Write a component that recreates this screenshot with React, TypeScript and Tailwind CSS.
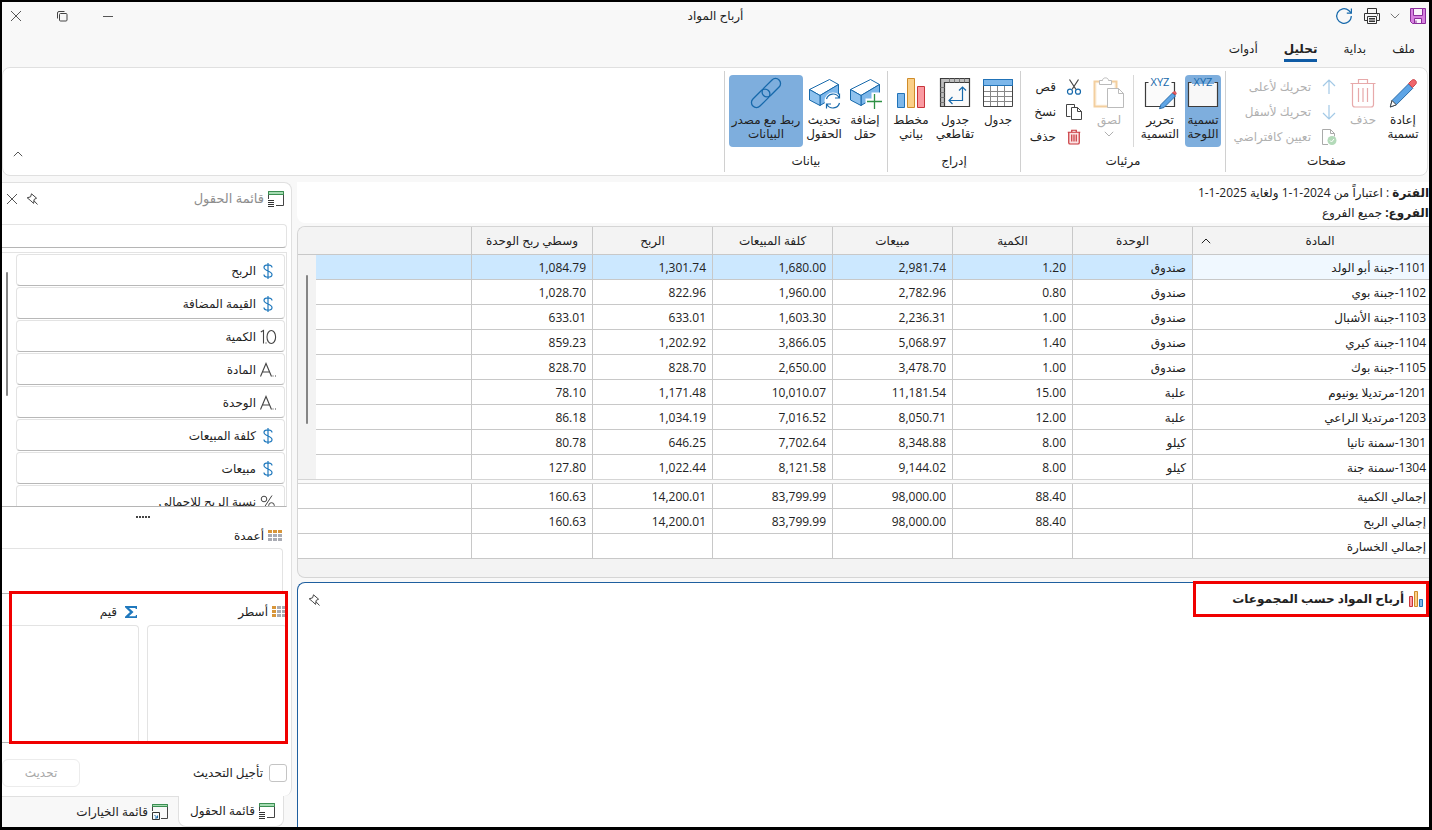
import React from "react";

type P = { className?: string };

const font = "font-['Open_Sans','DejaVu_Sans',sans-serif]";

/* ---------- icons ---------- */

const Svg = ({ s = 32, children, className = "" }: { s?: number; children: React.ReactNode; className?: string }) => (
  <svg width={s} height={s} viewBox={`0 0 ${s} ${s}`} fill="none" className={`shrink-0 overflow-visible ${className}`} aria-hidden="true">
    {children}
  </svg>
);

const RefreshIcon = () => (
  <Svg s={16}>
    <path d="M15.3 8A7.3 7.3 0 1 1 12.8 2.5L15.2 5" stroke="#1769ab" strokeWidth="1.2" />
    <path d="M15.4 0.5V5.2H10.8" stroke="#1769ab" strokeWidth="1.2" />
  </Svg>
);
const PrinterIcon = () => (
  <Svg s={16}>
    <path d="M3.5 5.5V.5h9v5M3.5 12.5h-3v-7h15v7h-3" stroke="#333" />
    <path d="M3.5 8.5h9v7h-9zM5 10.5h6M5 12h6M5 13.5h6M13 7h1" stroke="#333" />
  </Svg>
);
const SaveIcon = () => (
  <Svg s={16}>
    <path d="M.5.5h15v15H2.5l-2-2z" fill="#d77fe0" stroke="#8a2c9b" />
    <path d="M3.5.5h9v7h-9z" fill="#faf2fb" stroke="#8a2c9b" />
    <path d="M4.5 10.5h7v5h-7z" fill="#faf2fb" stroke="#8a2c9b" />
    <path d="M6 12.5v3" stroke="#8a2c9b" />
  </Svg>
);
const Chevron = ({ up, className = "" }: { up?: boolean; className?: string }) => (
  <Svg s={10} className={className}>
    <path d={up ? "M.8 7.2 5 3l4.2 4.2" : "M.8 2.8 5 7l4.2-4.2"} stroke="currentColor" />
  </Svg>
);
const CloseIcon = () => (
  <Svg s={12}>
    <path d="M1 1l10 10M11 1L1 11" stroke="#555" />
  </Svg>
);
const RestoreIcon = () => (
  <Svg s={12}>
    <rect x="3.5" y="3.5" width="7.5" height="7.5" rx="1" stroke="#444" />
    <path d="M1.5 8.5V3a1.5 1.5 0 0 1 1.5-1.5h5.5" stroke="#444" />
  </Svg>
);
const MinimizeIcon = () => (
  <Svg s={12}>
    <path d="M1 6.5h10" stroke="#555" />
  </Svg>
);
const PinIcon = () => (
  <Svg s={12}>
    <path d="M5.5.8 10.6 5.2 8.2 6.4 7.6 10.4 4.8 7.8 1.2 4.8 4.6 3.800z" stroke="#444" strokeLinejoin="round" />
    <path d="M8 7.8 11.500 11.500" stroke="#444" />
  </Svg>
);
const PencilIcon = () => (
  <Svg>
    <path d="M5 23.500 21.500 7l4.300 4.300L9.300 27.800 3.300 30z" fill="#5ea5e6" stroke="#2b6ca8" />
    <path d="M5 23.500l4.300 4.300-6 2.200z" fill="#fff" stroke="#444" />
    <path d="M21.500 6.500l3-3c1.500-1.400 3-1 4 0s1.300 2.600 0 4l-3 3z" fill="#f0666b" stroke="#c9474d" />
  </Svg>
);
const TrashIcon = ({ s = 32, faded }: { s?: number; faded?: boolean }) => (
  <svg width={s} height={s} viewBox="0 0 32 32" fill="none" aria-hidden="true" className="shrink-0"
    stroke={faded ? "#e7a9aa" : "#c8353b"} strokeWidth={faded ? 1.2 : 2.4}>
    <path d="M5.500 6.500v21q0 2.500 2.500 2.500h16q2.500 0 2.500-2.500v-21" fill={faded ? "none" : "#fbe3e3"} />
    <path d="M3.500 6.500h25M11.500 6.500v-4h9v4M11.500 11v14M16 11v14M20.500 11v14" />
  </svg>
);
const ArrowIcon = ({ down }: { down?: boolean }) => (
  <Svg s={16}>
    <path d={down ? "M8 1v14M2 9l6 6 6-6" : "M8 15V1M2 7l6-6 6 6"} stroke="#a3c9e6" strokeWidth="1.200" />
  </Svg>
);
const PageCheckIcon = () => (
  <Svg s={16}>
    <path d="M7 15.500H1.500V.5h8l4 4v3" stroke="#aaa" />
    <path d="M9.500.5v4h4" stroke="#aaa" />
    <circle cx="11" cy="11.500" r="4.500" fill="#b3dab9" />
    <path d="M9 11.500l1.500 1.500 2.500-3" stroke="#fff" />
  </Svg>
);
const XyzIcon = ({ pencil }: { pencil?: boolean }) => (
  <Svg>
    <path d="M1.500 5.500h29v24h-29z" fill={pencil ? "#fbfbfb" : "#f8f8f8"} />
    <path d="M5 4h22v3H5z" fill={pencil ? "#fff" : "#7eaedd"} />
    <path d="M4.500 5.500h-3v24h29v-24h-3" stroke="#3c3c3c" strokeWidth="1.200" />
    <text x="16" y="9" textAnchor="middle" fontSize="11" fontFamily="Open Sans" fill="#1769ab">XYZ</text>
    {pencil && (
      <g>
        <path d="M17 27.500 28.500 16l3 3L20 30.500l-4.500 1.200z" fill="#5ea5e6" stroke="#2b6ca8" />
        <path d="M28.500 16l1.200-1.200c1.200-1 3.500 1 2 2.800z" fill="#f0666b" stroke="#c9474d" />
      </g>
    )}
  </Svg>
);
const PasteIcon = () => (
  <Svg>
    <path d="M1.500 4.500h22v25h-22z" fill="#fdf6ec" stroke="#f3cf9f" strokeWidth="2" />
    <path d="M4 6.500h17v21H4z" fill="#fff" />
    <path d="M6.500 7.500v-4h3c0-3.500 6-3.500 6 0h3v4z" fill="#fff" stroke="#bbb" />
    <path d="M14.500 11.500h11l5 5v14h-16z" fill="#fff" stroke="#bbb" />
    <path d="M25.500 11.500v5h5" stroke="#bbb" />
  </Svg>
);
const CutIcon = () => (
  <Svg s={16}>
    <path d="M3.500.5l6.500 10M12.500.5L6 10.500" stroke="#444" strokeWidth="1.200" />
    <circle cx="4" cy="12.700" r="2.500" stroke="#1769ab" strokeWidth="1.200" />
    <circle cx="12" cy="12.700" r="2.500" stroke="#1769ab" strokeWidth="1.200" />
  </Svg>
);
const CopyIcon = () => (
  <Svg s={16}>
    <path d="M4.500 12.500h-4V.5h8v3" stroke="#444" />
    <path d="M5.500 3.500h6l4 4v8h-10z" stroke="#444" />
    <path d="M11.500 3.500v4h4" stroke="#444" />
  </Svg>
);
const TableIcon = () => (
  <Svg>
    <path d="M1.500 8.500h29v21h-29z" fill="#fff" />
    <path d="M1.500 14.500h29M1.500 19.500h29M1.500 24.500h29M8.500 8v21M15.500 8v21M22.500 8v21" stroke="#888" />
    <path d="M1.500 2.500h29v27h-29z" stroke="#444" />
    <path d="M1.500 2.500h29v6h-29z" fill="#7db7ea" stroke="#2173b8" />
  </Svg>
);
const PivotIcon = () => (
  <Svg>
    <path d="M1.500 1.500h29v28h-29z" fill="#fafafa" />
    <path d="M1.500 1.500h29v4h-25v24h-4z" fill="#bdbdbd" />
    <path d="M1.500 1.500h29v28h-29zM5.500 29V5.500H30" stroke="#3c3c3c" strokeWidth="1.200" />
    <path d="M10.500 1.500v4M15.500 1.500v4M20.500 1.500v4M25.500 1.500v4M1.500 10.500h4M1.500 15.500h4M1.500 20.500h4M1.500 25.500h4" stroke="#777" />
    <path d="M23.500 10.500v13h-13M20 13.500l3.500-3.500 3.500 3.500M13.500 20l-3.500 3.500 3.500 3.500" stroke="#1769ab" strokeWidth="1.200" />
  </Svg>
);
const ChartIcon = () => (
  <Svg>
    <path d="M2.500 16.500h7v14h-7z" fill="#7db7ea" stroke="#2173b8" />
    <path d="M12.500 1.500h7v29h-7z" fill="#fbd088" stroke="#cf8c2a" />
    <path d="M22.500 9.500h7v21h-7z" fill="#fa9ba2" stroke="#c8353b" />
  </Svg>
);
const CubeIcon = ({ refresh }: { refresh?: boolean }) => (
  <Svg>
    <path d="M1.500 12.500 21.500 2.500 30.500 7.500 12 18.500z" fill="#fff" stroke="#1769ab" />
    <path d="M12 18.500 30.500 7.500v10L12 28.500z" fill="#7db7ea" stroke="#1769ab" />
    <path d="M1.500 12.500v10.500L12 28.500V18.500z" fill="#8fc2ee" stroke="#1769ab" />
    {refresh ? (
      <g>
        <circle cx="25" cy="24" r="8.500" fill="#fff" />
        <path d="M18.500 22a6.800 6.800 0 0 1 12.500-1.500M31.500 26a6.800 6.800 0 0 1-12.500 1.500M31.500 16.500v4.500H27M18.500 31.500V27H23" stroke="#1769ab" strokeWidth="1.200" />
      </g>
    ) : (
      <g>
        <path d="M16.500 21.500h6v-6h9.500v17H16.500z" fill="#fff" />
        <path d="M25.500 17v15M18 24.500h15" stroke="#2e9145" strokeWidth="1.300" />
      </g>
    )}
  </Svg>
);
const LinkIcon = () => (
  <Svg>
    <g stroke="#1769ab" strokeWidth="1.300" transform="rotate(-45 16 16)">
      <rect x="-2.500" y="11" width="22" height="10" rx="5" />
      <path d="M12.500 16a5 5 0 0 1 5-5h12a5 5 0 0 1 0 10h-12a5 5 0 0 1-5-5z" />
    </g>
  </Svg>
);
const ListIcon = () => (
  <Svg s={16}>
    <path d="M.5 8V.5h15v14H8" stroke="#444" />
    <path d="M.5.500h15v3H.5z" fill="#a5dbb2" stroke="#3b8f52" />
    <path d="M0 9.500h6M0 11.500h6M0 13.500h6M0 15.500h6" stroke="#333" />
  </Svg>
);
const OptionsIcon = () => (
  <Svg s={16}>
    <path d="M.5 7V.5h15v14H9" stroke="#444" />
    <path d="M.5.500h15v2H.5z" fill="#a5dbb2" stroke="#3b8f52" />
    <path d="M.5 8.500h7v7h-7z" stroke="#333" />
    <path d="M2.500 11l3 3M5.500 11.500v2.500H3" stroke="#1769ab" />
  </Svg>
);
const GridIcon = ({ side }: { side?: boolean }) => (
  <Svg s={14}>
    {[0, 1, 2].map((r) =>
      [0, 1, 2].map((c) => (
        <rect key={`${r}${c}`} x={c * 5} y={1 + r * 4} width="4" height="3" fill={(side ? c === 0 : r === 0) ? "#d8963a" : "#a9abb3"} />
      )),
    )}
  </Svg>
);
const SigmaIcon = () => (
  <Svg s={12}>
    <path d="M0 0h12v3h-1.200l-.5-1H4l4.500 4L4 10.200h6.500l.5-1.200H12v3H0v-1.200L5 6 0 1.200z" fill="#1f78bd" />
  </Svg>
);
const MiniChartIcon = () => (
  <Svg s={16}>
    <path d="M1.500 5.500h3v10h-3z" fill="#fa9ba2" stroke="#c8353b" />
    <path d="M6.500.5h3v15h-3z" fill="#fbd088" stroke="#cf8c2a" />
    <path d="M11.500 8.500h3v7h-3z" fill="#7db7ea" stroke="#2173b8" />
  </Svg>
);

/* ---------- ribbon ---------- */

const BigButton = ({ icon, lines, className = "", disabled, active, arrow }: {
  icon: React.ReactNode; lines: string[]; className?: string; disabled?: boolean; active?: boolean; arrow?: boolean;
}) => (
  <button
    disabled={disabled}
    className={`flex h-[72px] shrink-0 flex-col items-center rounded whitespace-nowrap pt-0.5 leading-[14px] ${active ? "bg-[#7eaedd]" : ""} ${disabled ? "text-[#b0b0b0]" : ""} ${className}`}
  >
    {icon}
    <span className="mt-1 block">
      {lines.map((l) => (
        <span key={l} className="block">{l}</span>
      ))}
    </span>
    {arrow && <Chevron className="mt-0.5" />}
  </button>
);

const SmallButton = ({ icon, label, disabled }: { icon: React.ReactNode; label: string; disabled?: boolean }) => (
  <button disabled={disabled} className={`flex h-[25px] items-center gap-[10px] whitespace-nowrap pb-0.5 ${disabled ? "text-[#b0b0b0]" : ""}`}>
    {icon}
    {label}
  </button>
);

const Group = ({ title, className, children }: { title: string; className: string; children: React.ReactNode }) => (
  <section className={`my-[3px] flex shrink-0 flex-col border-l border-[#d0d0d0] ${className}`}>
    <div className="flex flex-1 items-start pt-1">{children}</div>
    <h2 className="pb-px text-center leading-5">{title}</h2>
  </section>
);

const Ribbon = () => (
  <div className="mr-px flex h-[109px] shrink-0 rounded-lg border border-[#e0e0e0] bg-white">
    <Group title="صفحات" className="w-[202px]">
      <BigButton className="w-[48px]" icon={<PencilIcon />} lines={["إعادة", "تسمية"]} />
      <BigButton className="w-[32px]" icon={<TrashIcon faded />} lines={["حذف"]} disabled />
      <div className="mr-[10px]">
        <SmallButton icon={<ArrowIcon />} label="تحريك لأعلى" disabled />
        <SmallButton icon={<ArrowIcon down />} label="تحريك لأسفل" disabled />
        <SmallButton icon={<PageCheckIcon />} label="تعيين كافتراضي" disabled />
      </div>
    </Group>
    <Group title="مرئيات" className="w-[205px]">
      <BigButton className="mr-1 w-[36px]" icon={<XyzIcon />} lines={["تسمية", "اللوحة"]} active />
      <BigButton className="mr-1 w-[42px]" icon={<XyzIcon pencil />} lines={["تحرير", "التسمية"]} />
      <div className="mr-[5px] h-[72px] w-px bg-[#d8d8d8]" />
      <BigButton className="mr-1 w-[40px]" icon={<PasteIcon />} lines={["لصق"]} disabled arrow />
      <div className="mr-[7px]">
        <SmallButton icon={<CutIcon />} label="قص" />
        <SmallButton icon={<CopyIcon />} label="نسخ" />
        <SmallButton icon={<TrashIcon s={16} />} label="حذف" />
      </div>
    </Group>
    <Group title="إدراج" className="w-[133px]">
      <BigButton className="mr-1 w-[36px]" icon={<TableIcon />} lines={["جدول"]} />
      <BigButton className="mr-1 w-[42px]" icon={<PivotIcon />} lines={["جدول", "تقاطعي"]} />
      <BigButton className="mr-1 w-[38px]" icon={<ChartIcon />} lines={["مخطط", "بياني"]} />
    </Group>
    <Group title="بيانات" className="w-[163px]">
      <BigButton className="mr-1 w-[36px]" icon={<CubeIcon />} lines={["إضافة", "حقل"]} />
      <BigButton className="mr-1 w-[38px]" icon={<CubeIcon refresh />} lines={["تحديث", "الحقول"]} />
      <BigButton className="mr-0.5 w-[74px]" icon={<LinkIcon />} lines={["ربط مع مصدر", "البيانات"]} active />
    </Group>
    <div className="flex flex-1 items-end justify-end p-[10px] pb-4 text-[#555]">
      <button aria-label="طي الشريط"><Chevron up /></button>
    </div>
  </div>
);

/* ---------- data table ---------- */

const headers = ["المادة", "الوحدة", "الكمية", "مبيعات", "كلفة المبيعات", "الربح", "وسطي ربح الوحدة", ""];

const rows = [
  ["1101-جبنة أبو الولد", "صندوق", "1.20", "2,981.74", "1,680.00", "1,301.74", "1,084.79"],
  ["1102-جبنة بوي", "صندوق", "0.80", "2,782.96", "1,960.00", "822.96", "1,028.70"],
  ["1103-جبنة الأشبال", "صندوق", "1.00", "2,236.31", "1,603.30", "633.01", "633.01"],
  ["1104-جبنة كيري", "صندوق", "1.40", "5,068.97", "3,866.05", "1,202.92", "859.23"],
  ["1105-جبنة بوك", "صندوق", "1.00", "3,478.70", "2,650.00", "828.70", "828.70"],
  ["1201-مرتديلا يونيوم", "علبة", "15.00", "11,181.54", "10,010.07", "1,171.48", "78.10"],
  ["1203-مرتديلا الراعي", "علبة", "12.00", "8,050.71", "7,016.52", "1,034.19", "86.18"],
  ["1301-سمنة تانيا", "كيلو", "8.00", "8,348.88", "7,702.64", "646.25", "80.78"],
  ["1304-سمنة جنة", "كيلو", "8.00", "9,144.02", "8,121.58", "1,022.44", "127.80"],
];

const totals = [
  ["إجمالي الكمية", "", "88.40", "98,000.00", "83,799.99", "14,200.01", "160.63"],
  ["إجمالي الربح", "", "88.40", "98,000.00", "83,799.99", "14,200.01", "160.63"],
  ["إجمالي الخسارة", "", "", "", "", "", ""],
];

const Cols = () => (
  <colgroup>
    <col className="w-[237px]" />
    <col className="w-[120px]" />
    <col className="w-[120px]" />
    <col className="w-[120px]" />
    <col className="w-[120px]" />
    <col className="w-[120px]" />
    <col className="w-[121px]" />
    <col />
  </colgroup>
);

const Row = ({ cells, selected }: { cells: string[]; selected?: boolean }) => (
  <tr className={`h-[25px] ${selected ? "bg-[#cce8ff]" : "bg-white"}`}>
    {cells.map((c, i) => (
      <td
        key={i}
        className={`overflow-hidden border-b border-l border-[#c8c8c8] p-0 pt-0.5 text-right leading-[22px] whitespace-nowrap ${i === 0 ? "pr-[3px]" : "pr-[6px]"} ${selected && i === 0 ? "bg-[#f0f8ff]" : ""}`}
      >
        {c}
      </td>
    ))}
    <td className="border-b border-[#c8c8c8] p-0" />
  </tr>
);

const DataGrid = () => (
  <div className="mt-[3px] shrink-0 overflow-hidden rounded-l-lg border border-r-0 border-[#d5d5d5] bg-[#f3f3f3]">
    <div className="relative h-[252px] overflow-hidden">
      <table className="w-full table-fixed border-separate border-spacing-0">
        <Cols />
        <thead>
          <tr className="h-[28px] bg-[#f3f3f3]">
            {headers.map((h, i) => (
              <th key={i} className={`border-b border-[#c8c8c8] p-0 font-medium whitespace-nowrap text-[#222] ${i < 7 ? "border-l" : ""}`}>
                {i === 0 ? (
                  <span className="flex items-center pl-2">
                    <span className="flex-1">{h}</span>
                    <Chevron up />
                  </span>
                ) : h}
              </th>
            ))}
          </tr>
        </thead>
        <tbody>
          {rows.map((r, i) => (
            <Row key={i} cells={r} selected={i === 0} />
          ))}
        </tbody>
      </table>
      <div className="absolute top-[28px] bottom-0 left-0 flex w-[18px] justify-center bg-[#f3f3f3] pt-5">
        <div className="h-[149px] w-0.5 rounded bg-[#858585]" />
      </div>
    </div>
    <div className="h-[5px] border-y border-[#d5d5d5] bg-[#fafafa]" />
    <table className="w-full table-fixed border-separate border-spacing-0">
      <Cols />
      <tbody>
        {totals.map((r, i) => (
          <Row key={i} cells={r} />
        ))}
      </tbody>
    </table>
    <div className="h-[18px]" />
  </div>
);

/* ---------- field list ---------- */

const fields: [string, string][] = [
  ["$", "الربح"],
  ["$", "القيمة المضافة"],
  ["10", "الكمية"],
  ["A", "المادة"],
  ["A", "الوحدة"],
  ["$", "كلفة المبيعات"],
  ["$", "مبيعات"],
  ["%", "نسبة الربح للإجمالي"],
];

const Glyph = ({ kind }: { kind: string }) => {
  if (kind === "$")
    return (
      <Svg s={16}>
        <path d="M12 4.500C12 1 4 1 4 4.500s8 3.500 8 7-8 3.500-8 0M8 0v16" stroke="#1f78bd" strokeWidth="1.200" />
      </Svg>
    );
  if (kind === "10")
    return (
      <Svg s={16}>
        <path d="M.8 3 3.500 1.500v13M6 13.500v1" stroke="#444" strokeWidth="1.100" />
        <ellipse cx="11.300" cy="8" rx="4.300" ry="6.500" stroke="#444" strokeWidth="1.100" />
      </Svg>
    );
  if (kind === "A")
    return (
      <Svg s={16}>
        <path d="M.5 14.500 6 1.500l5.500 13M2.500 10h7M12.500 14h1M15 14h1" stroke="#444" strokeWidth="1.100" />
      </Svg>
    );
  return (
    <Svg s={16}>
      <path d="M3.500 14.500 12 1.500" stroke="#444" />
      <circle cx="4" cy="5" r="2.800" stroke="#444" />
      <circle cx="11.500" cy="11.500" r="2.800" stroke="#444" />
    </Svg>
  );
};

const IconButton = ({ label, children, className = "" }: { label: string; children: React.ReactNode } & P) => (
  <button aria-label={label} className={className}>{children}</button>
);

const Sidebar = () => (
  <aside className="flex w-[290px] shrink-0 flex-col">
    <div className="flex min-h-0 flex-1 flex-col rounded-r-lg border border-b-0 border-l-0 border-[#e0e0e0] bg-white">
      <header className="flex h-[32px] shrink-0 items-center pr-[7px] pl-1">
        <ListIcon />
        <h2 className="mr-1 text-[13px] text-[#8e8e8e]">قائمة الحقول</h2>
        <span className="flex-1" />
        <IconButton label="تثبيت"><PinIcon /></IconButton>
        <IconButton label="إغلاق" className="mr-2"><CloseIcon /></IconButton>
      </header>
      <input aria-label="بحث في الحقول" className="mt-[9px] mr-1 h-[24px] shrink-0 rounded-r border border-l-0 border-[#e3e3e3] border-b-[#b5b5b5] outline-none" />
      <div className="mt-1 mr-1 flex h-[255px] shrink-0 overflow-hidden border border-l-0 border-[#e3e3e3] border-b-[#b5b5b5] pt-px pr-px">
        <ul className="flex-1">
          {fields.map(([k, l], i) => (
            <li key={i} className="mb-px flex h-[32px] items-center gap-1 rounded border border-[#e3e3e3] border-b-[#b8b8b8] pt-0.5 pr-2">
              <Glyph kind={k} />
              {l}
            </li>
          ))}
        </ul>
        <div className="w-[14px] pt-[18px] pl-1">
          <div className="mr-auto h-[124px] w-0.5 rounded bg-[#858585]" />
        </div>
      </div>
      <div className="flex h-[20px] shrink-0 items-center justify-center gap-px pr-2">
        {[0, 1, 2, 3, 4].map((i) => (
          <span key={i} className="size-0.5 bg-[#444]" />
        ))}
      </div>
      <h3 className="mb-1 flex h-[17px] shrink-0 items-center gap-1 pr-[9px]"><GridIcon />أعمدة</h3>
      <div className="mr-2 h-[46px] shrink-0 rounded-tr border border-l-0 border-[#e3e3e3] border-b-[#b5b5b5]" />
      <div className="relative flex shrink-0 gap-2 pt-1 pr-1">
        <div className="w-[140px]">
          <h3 className="flex h-[27px] items-center gap-1 pr-px"><GridIcon side />أسطر</h3>
          <div className="h-[118px] rounded-t border border-[#e3e3e3] border-b-[#b5b5b5]" />
        </div>
        <div className="flex-1">
          <h3 className="flex h-[27px] items-center gap-2 pr-0.5"><SigmaIcon />قيم</h3>
          <div className="h-[118px] rounded-tr border border-l-0 border-[#e3e3e3] border-b-[#b5b5b5]" />
        </div>
        <div className="pointer-events-none absolute -top-[3px] right-[3px] -bottom-px left-[7px] border-[3px] border-[#f00000]" />
      </div>
      <div className="flex flex-1 items-center justify-between pt-1.5 pr-1">
        <label className="flex items-center gap-1.5">
          <input type="checkbox" className="size-[18px] appearance-none rounded-[3px] border border-[#c4c4c4] bg-white" />
          تأجيل التحديث
        </label>
        <button disabled className="h-[28px] w-[78px] rounded-md border border-[#ececec] text-[#a8a8a8]">تحديث</button>
      </div>
    </div>
    <nav className="flex h-[31px] shrink-0 items-stretch pr-2">
      <button className="flex w-[106px] items-center gap-1 rounded-b-lg border border-t-0 border-[#e0e0e0] bg-white pr-2 whitespace-nowrap">
        <ListIcon />قائمة الحقول
      </button>
      <button className="flex flex-1 items-center gap-1 border-t border-[#e0e0e0] pr-[10px] whitespace-nowrap">
        <OptionsIcon />قائمة الخيارات
      </button>
    </nav>
  </aside>
);

/* ---------- page ---------- */

export default function App() {
  return (
    <div dir="rtl" className={`flex h-screen min-h-[700px] flex-col overflow-hidden border-2 border-r-[3px] border-b-[3px] border-black bg-[#f8f8f8] text-[12px] text-[#222] ${font}`}>
      <header className="grid h-[28px] shrink-0 grid-cols-3 items-center">
        <div className="flex items-center pr-[3px]">
          <IconButton label="حفظ"><SaveIcon /></IconButton>
          <IconButton label="المزيد" className="mr-[10px] text-[#777]"><Chevron /></IconButton>
          <IconButton label="طباعة" className="mr-[10px]"><PrinterIcon /></IconButton>
          <IconButton label="تحديث" className="mr-3"><RefreshIcon /></IconButton>
        </div>
        <h1 className="text-center">أرباح المواد</h1>
        <div className="flex items-center justify-end gap-[34px] pl-2">
          <IconButton label="تصغير"><MinimizeIcon /></IconButton>
          <IconButton label="استعادة"><RestoreIcon /></IconButton>
          <IconButton label="إغلاق"><CloseIcon /></IconButton>
        </div>
      </header>
      <nav className="flex h-[37px] shrink-0 items-start gap-[26px] pt-[9px] pr-[14px] leading-5">
        <a href="#file" className="pb-0.5">ملف</a>
        <a href="#home" className="pb-0.5">بداية</a>
        <a href="#analyze" className="border-b-[3px] border-[#0f5ba5] font-semibold">تحليل</a>
        <a href="#tools" className="pb-0.5">أدوات</a>
      </nav>
      <Ribbon />
      <div className="flex min-h-0 flex-1 gap-[5px] pt-[6px]">
        <main className="flex min-w-0 flex-1 flex-col">
          <div className="shrink-0 rounded-bl-lg bg-white pt-px leading-5">
            <p><b>الفترة</b> : اعتباراً من <bdi>1-1-2024</bdi> ولغاية <bdi>1-1-2025</bdi></p>
            <p><b>الفروع:</b> جميع الفروع</p>
          </div>
          <DataGrid />
          <section className="mt-1 flex-1 rounded-tl-lg border-t border-l border-[#1f5f9f] bg-white">
            <div className="flex items-start justify-between pl-[10px]">
              <h2 className="-mt-0.5 flex h-[36px] w-[236px] items-center gap-1 border-[3px] border-[#f00000] pr-0.5 font-bold">
                <MiniChartIcon />أرباح المواد حسب المجموعات
              </h2>
              <IconButton label="تثبيت" className="mt-[11px]"><PinIcon /></IconButton>
            </div>
          </section>
        </main>
        <Sidebar />
      </div>
    </div>
  );
}
